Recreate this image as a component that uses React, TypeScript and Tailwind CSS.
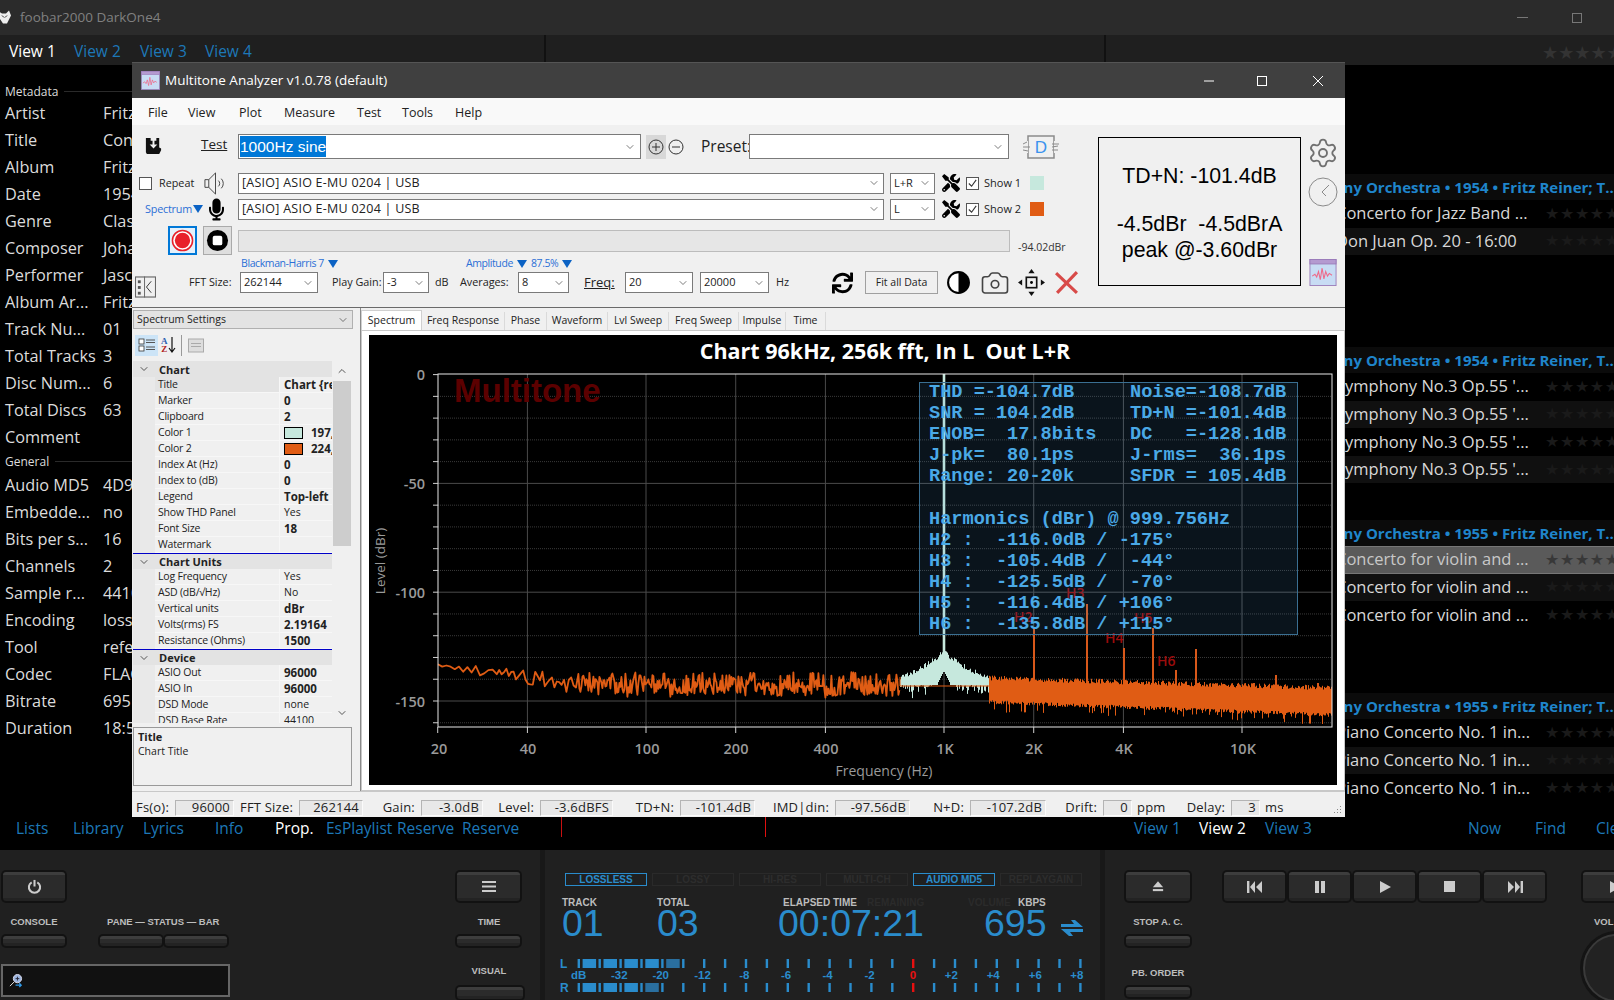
import React from "react";
import { FaTools, FaMicrophone, FaSync } from "react-icons/fa";
import { Camera, ChevronDown, ChevronUp, Settings } from "lucide-react";

function rng(seed: number) {
  let a = seed;
  return () => {
    a |= 0; a = (a + 0x6d2b79f5) | 0;
    let t = Math.imul(a ^ (a >>> 15), 1 | a);
    t = (t + Math.imul(t ^ (t >>> 7), 61 | t)) ^ t;
    return ((t ^ (t >>> 14)) >>> 0) / 4294967296;
  };
}

const meta = [
  ["Artist", "Fritz Reiner"], ["Title", "Concerto for Jazz"], ["Album", "Fritz Reiner"], ["Date", "1954"],
  ["Genre", "Classical"], ["Composer", "Johann"], ["Performer", "Jascha"], ["Album Ar...", "Fritz Reiner"],
  ["Track Nu...", "01"], ["Total Tracks", "3"], ["Disc Num...", "6"], ["Total Discs", "63"], ["Comment", ""],
];
const general = [
  ["Audio MD5", "4D9C"], ["Embedde...", "no"], ["Bits per s...", "16"], ["Channels", "2"], ["Sample r...", "44100"],
  ["Encoding", "lossless"], ["Tool", "reference"], ["Codec", "FLAC"], ["Bitrate", "695 kbps"], ["Duration", "18:53"],
];

function PropRow({ k, v }: { k: string; v: string }) {
  return (
    <div className="flex h-[27px] items-center text-[16.3px] text-[#dcdcdc] whitespace-nowrap">
      <span className="w-[98px] pl-[5px]">{k}</span>
      <span className="pl-[5px]">{v}</span>
    </div>
  );
}

function Stars({ tone }: { tone: string }) {
  return <span className={`w-[69px] shrink-0 overflow-hidden whitespace-nowrap text-[16px] leading-none font-['DejaVu_Sans',sans-serif] tracking-[0.6px] ${tone}`}>★★★★★</span>;
}

function Track({ t, alt, sel }: { t: string; alt?: boolean; sel?: boolean }) {
  return (
    <div className={`flex h-[27.6px] items-center justify-between pl-[231px] text-[16.5px] whitespace-nowrap ${sel ? "bg-[#5a5a5a] border-t border-b border-[#777777] text-[#c8c8c8]" : alt ? "bg-[#101010] text-[#d8d8d8]" : "text-[#d8d8d8]"}`}>
      <span>{t}</span>
      <Stars tone={sel ? "text-[#383838]" : "text-[#1a1a1a]"} />
    </div>
  );
}

function Group({ h, rows, sel }: { h: string; rows: string[]; sel?: number }) {
  return (
    <div className="h-[173px]">
      <div className="flex h-[26px] pt-[1px] items-center justify-end bg-[#0b0b0b] text-[15px] font-bold text-[#1f85cb] whitespace-nowrap overflow-hidden">
        <span className="mr-[-4px]">{h}</span>
      </div>
      {rows.map((r, i) => <Track key={i} t={r} alt={i % 2 === 1} sel={sel === i} />)}
    </div>
  );
}

function Chev() {
  return <ChevronDown className="w-[12px] h-[12px] text-[#444] shrink-0" strokeWidth={1.4} />;
}

function Combo({ t, cls, text = "text-[11px]" }: { t: string; cls: string; text?: string }) {
  return (
    <div className={`flex items-center justify-between h-[21px] border border-[#7a7a7a] bg-white pl-[3px] pr-[3px] shrink-0 ${cls}`}>
      <span className={`${text} text-[#222] whitespace-nowrap`}>{t}</span>
      <Chev />
    </div>
  );
}

function Tri() {
  return <span className="inline-block ml-[4px] w-0 h-0 border-l-[5px] border-r-[5px] border-t-[8px] border-l-transparent border-r-transparent border-t-[#0b62c4]" />;
}

function DevRow({ chan, show, swatch, left }: { chan: string; show: string; swatch: string; left: React.ReactNode }) {
  return (
    <div className="flex items-center h-[20px]">
      {left}
      <Combo t="[ASIO] ASIO E-MU 0204 | USB" cls="w-[646px]" text="text-[12.5px] tracking-[0.25px]" />
      <Combo t={chan} cls="w-[45px] ml-[6px]" />
      <FaTools className="w-[18px] h-[18px] ml-[7px] text-black shrink-0" />
      <div className="w-[13px] h-[13px] ml-[6px] border border-[#555] bg-white flex items-center justify-center shrink-0">
        <svg viewBox="0 0 12 12" className="w-[11px] h-[11px]"><path d="M2 6l3 3 5-7" fill="none" stroke="#333" strokeWidth="1.2" /></svg>
      </div>
      <span className="ml-[5px] w-[46px] text-[11px] text-[#222] whitespace-nowrap">{show}</span>
      <div className={`w-[14px] h-[14px] shrink-0 ${swatch}`} />
    </div>
  );
}

const propSections: { name: string; line?: boolean; rows: [string, string, number?, string?][] }[] = [
  { name: "Chart", rows: [["Title", "Chart {re", 1], ["Marker", "0", 1], ["Clipboard", "2", 1], ["Color 1", "197,", 1, "bg-[#c6e8dd]"], ["Color 2", "224,", 1, "bg-[#e05c14]"], ["Index At (Hz)", "0", 1], ["Index to (dB)", "0", 1], ["Legend", "Top-left", 1], ["Show THD Panel", "Yes", 0], ["Font Size", "18", 1], ["Watermark", "", 0]] },
  { name: "Chart Units", line: true, rows: [["Log Frequency", "Yes", 0], ["ASD (dB/√Hz)", "No", 0], ["Vertical units", "dBr", 1], ["Volts(rms) FS", "2.19164", 1], ["Resistance (Ohms)", "1500", 1]] },
  { name: "Device", line: true, rows: [["ASIO Out", "96000", 1], ["ASIO In", "96000", 1], ["DSD Mode", "none", 0], ["DSD Base Rate", "44100", 0]] },
];

function PropGrid() {
  return (
    <div className="flex w-[218px] h-[362px] overflow-hidden">
      <div className="w-[199px] leading-none text-[#222]">
        {propSections.map((s) => (
          <div key={s.name}>
            <div className={`flex h-[16px] items-center bg-[#e3e3e3] text-[11px] font-bold ${s.line ? "border-t border-t-[#0000c8]" : ""}`}>
              <ChevronDown className="w-[12px] h-[12px] ml-[5px] mr-[9px] text-[#555]" strokeWidth={2} />
              <span className="whitespace-nowrap">{s.name}</span>
            </div>
            {s.rows.map(([n, v, b, sw], i) => (
              <div key={n} className="flex h-[16px] bg-[#e9e9e9] pl-[22px]">
                <div className={`w-[124px] flex items-center pl-[3px] text-[10.5px] tracking-[-0.2px] whitespace-nowrap border-b border-b-[#f7f7f7] ${s.name === "Chart" && i === 0 ? "bg-[#e3e3e3]" : "bg-[#f0f0f0]"}`}>{n}</div>
                <div className={`w-[53px] flex items-center pl-[4px] overflow-hidden whitespace-nowrap border-l border-l-[#f7f7f7] border-b border-b-[#f7f7f7] bg-[#f0f0f0] ${b ? "font-bold text-[11.5px]" : "text-[10.5px]"}`}>
                  {sw ? <span className={`w-[19px] h-[12px] border border-black mr-[8px] shrink-0 ${sw}`} /> : null}
                  {v}
                </div>
              </div>
            ))}
          </div>
        ))}
      </div>
      <div className="w-[19px] h-full bg-[#f0f0f0] flex flex-col items-center">
        <ChevronUp className="w-[12px] h-[12px] mt-[4px] mb-[4px] text-[#555]" strokeWidth={2} />
        <div className="w-[18px] h-[165px] bg-[#cdcdcd]" />
        <div className="flex-1" />
        <ChevronDown className="w-[12px] h-[12px] mb-[4px] text-[#555]" strokeWidth={2} />
      </div>
    </div>
  );
}

function SpectrumChart() {
  const fx = (f: number) => 944 + 298 * Math.log10(f / 1000);
  const dy = (d: number) => 373.6 - d * 2.176;
  const r = rng(42);
  let low = "";
  for (let x = 438; x < 900; ) {
    const p = (x - 438) / 462;
    const base = 663 + 20 * Math.min(1, Math.pow(p / 0.35, 0.7));
    const amp = p < 0.04 ? 3 : 7 + 17 * Math.min(1, p * 2.5);
    let y = base + (r() - 0.5) * amp;
    if (r() > 0.93) y += r() * 8;
    low += (low ? "L" : "M") + x.toFixed(1) + " " + y.toFixed(1);
    x += p < 0.12 ? 4.2 : p < 0.3 ? 2.4 : 1;
  }
  let band = "";
  for (let x = 989.5; x < 1332; x += 1) {
    const p = (x - 989) / 343;
    const top = 677 + 10 * p + (r() - 0.5) * 5;
    const spike = r() > 0.85 ? r() * 12 : r() * 4;
    const bot = 699 + 13 * p + spike;
    band += `M${x} ${top.toFixed(1)}V${bot.toFixed(1)}`;
  }
  let mint = "";
  for (let x = 900.5; x < 990; x += 1) {
    const d = Math.abs(x - 944);
    const top = 645 + 32 * Math.pow(Math.min(1, d / 46), 0.55) + (r() - 0.5) * 5;
    const drop = d < 12 ? 0 : r() * r() * 16;
    const bot = 684 + drop - (d < 6 ? 14 - d * 2 : 0);
    mint += `M${x} ${top.toFixed(1)}V${bot.toFixed(1)}`;
  }
  const spikes: [number, number][] = [[1034, 627], [1087, 603], [1124, 647], [1153, 627], [1176, 669], [1196, 648], [1276, 674], [1102, 678], [1138, 682], [1254, 682], [1318, 682]];
  const left = ["THD =-104.7dB", "SNR = 104.2dB", "ENOB=  17.8bits", "J-pk=  80.1ps", "Range: 20-20k", "", "Harmonics (dBr) @ 999.756Hz", "H2 :  -116.0dB / -175°", "H3 :  -105.4dB /  -44°", "H4 :  -125.5dB /  -70°", "H5 :  -116.4dB / +106°", "H6 :  -135.8dB / +115°"];
  const right = ["Noise=-108.7dB", "TD+N =-101.4dB", "DC   =-128.1dB", "J-rms=  36.1ps", "SFDR = 105.4dB"];
  return (
    <svg viewBox="369 334 968 450" className="w-[968px] h-[450px] block bg-black">
      <text x="885" y="358" textAnchor="middle" fill="#fff" fontSize="21.5" fontWeight="700" fontFamily="Open Sans" xmlSpace="preserve">Chart 96kHz, 256k fft, In L  Out L+R</text>
      {[-10, -20, -30, -40, -60, -70, -80, -90, -110, -120, -130, -140, -160].map((d) => (
        <line key={d} x1="438" x2="1332" y1={dy(d)} y2={dy(d)} stroke="#3a3a3a" strokeWidth="1" strokeDasharray="1 1" />
      ))}
      {[-50, -100, -150].map((d) => (
        <line key={d} x1="438" x2="1332" y1={dy(d)} y2={dy(d)} stroke="#4a4a4a" strokeWidth="1" />
      ))}
      {[40, 100, 200, 400, 1000, 2000, 4000, 10000].map((f) => (
        <line key={f} x1={fx(f)} x2={fx(f)} y1="373" y2="726" stroke="#4a4a4a" strokeWidth="1" />
      ))}
      <text x="454" y="401" fill="#5c0000" fontSize="33" fontWeight="700" fontFamily="Liberation Sans">Multitone</text>
      <path d={mint} stroke="#c6e8dd" strokeWidth="1" fill="none" />
      <line x1="944" x2="944" y1="373" y2="660" stroke="#c6e8dd" strokeWidth="2.6" />
      <path d={low} stroke="#e05c14" strokeWidth="1.8" fill="none" strokeLinejoin="round" />
      <path d="M900 676V685H989" stroke="#e05c14" strokeWidth="1" fill="none" />
      {spikes.map(([x, y]) => <line key={x} x1={x} x2={x} y1={y} y2="690" stroke="#d8581a" strokeWidth="2" />)}
      <path d={band} stroke="#e05c14" strokeWidth="1" fill="none" />
      <rect x="438" y="373" width="894" height="353" fill="none" stroke="#e8e8e8" strokeWidth="1" />
      {[0, -10, -20, -30, -40, -50, -60, -70, -80, -90, -100, -110, -120, -130, -140, -150, -160].map((d) => (
        <line key={d} x1="433" x2="438" y1={dy(d)} y2={dy(d)} stroke="#d0d0d0" />
      ))}
      {[20, 40, 100, 200, 400, 1000, 2000, 4000, 10000].map((f) => (
        <line key={f} x1={fx(f)} x2={fx(f)} y1="726" y2="732" stroke="#d0d0d0" />
      ))}
      <g fill="#9a9a9a" fontSize="14.5" fontWeight="600" fontFamily="Open Sans" textAnchor="end">
        <text x="425" y="379">0</text>
        <text x="425" y="488">-50</text>
        <text x="425" y="597">-100</text>
        <text x="425" y="706">-150</text>
      </g>
      <g fill="#9a9a9a" fontSize="14.5" fontWeight="600" fontFamily="Open Sans" textAnchor="middle">
        <text x="439" y="753">20</text>
        <text x="528" y="753">40</text>
        <text x="647" y="753">100</text>
        <text x="736" y="753">200</text>
        <text x="826" y="753">400</text>
        <text x="945" y="753">1K</text>
        <text x="1034" y="753">2K</text>
        <text x="1124" y="753">4K</text>
        <text x="1243" y="753">10K</text>
      </g>
      <text x="884" y="775" fill="#9a9a9a" fontSize="14" textAnchor="middle" fontFamily="Open Sans">Frequency (Hz)</text>
      <text transform="translate(385 560) rotate(-90)" fill="#9a9a9a" fontSize="13.5" textAnchor="middle" fontFamily="Open Sans">Level (dBr)</text>
      <g fill="#9c0c0c" fontSize="14" fontWeight="600" fontFamily="Open Sans">
        <text x="1014" y="621">H2</text>
        <text x="1066" y="597">H3</text>
        <text x="1105" y="642">H4</text>
        <text x="1134" y="622">H5</text>
        <text x="1157" y="665">H6</text>
      </g>
      <rect x="919.5" y="381.5" width="378" height="252" fill="#4f9bd6" fillOpacity="0.13" stroke="#3a6f92" strokeWidth="1" />
      <g fill="#4aa9e6" fontSize="18.6" fontWeight="700" fontFamily="Liberation Mono">
        {left.map((l, i) => <text key={i} x="929" y={396 + i * 21.1} xmlSpace="preserve">{l}</text>)}
        {right.map((l, i) => <text key={i} x="1130" y={396 + i * 21.1} xmlSpace="preserve">{l}</text>)}
      </g>
    </svg>
  );
}

function Stat({ l, lc, v, bc }: { l: string; lc: string; v: string; bc: string }) {
  return (
    <>
      <span className={`text-right whitespace-nowrap shrink-0 ${lc}`}>{l}</span>
      <span className={`ml-[6px] h-[16px] shrink-0 flex items-center justify-end pr-[3px] bg-[#e8e8e8] border-t border-l border-[#b4b4b4] border-b border-b-[#fbfbfb] border-r border-r-[#fbfbfb] whitespace-nowrap ${bc}`}>{v}</span>
    </>
  );
}

function AppIcon({ cls }: { cls: string }) {
  return (
    <svg viewBox="0 0 30 30" className={cls}>
      <rect x="0.5" y="0.5" width="29" height="29" fill="#c8dcf4" stroke="#9a7ab8" />
      <rect x="0.5" y="0.5" width="29" height="5" fill="#b49ad0" stroke="#9a7ab8" />
      <path d="M3 19l3-2 2 3 2-6 2 9 2-13 2 12 2-8 2 5 2-3 3 2" fill="none" stroke="#ee6a8a" strokeWidth="1.2" />
    </svg>
  );
}

function TopWindow() {
  return (
    <div className="absolute left-[132px] top-[62px] w-[1213px] h-[755px] z-10 bg-[#f0f0f0] border-t border-t-[#555] flex flex-col text-[#222]">
      <div className="h-[35px] bg-[#404040] flex items-center pl-[9px] shrink-0">
        <AppIcon cls="w-[19px] h-[19px] shrink-0" />
        <span className="ml-[5px] text-[13.5px] text-white whitespace-nowrap">Multitone Analyzer v1.0.78 (default)</span>
        <div className="flex-1" />
        <svg width="12" height="12" viewBox="0 0 12 12" className="mr-[41px]"><path d="M1 6h10" stroke="#fff" /></svg>
        <svg width="12" height="12" viewBox="0 0 12 12" className="mr-[44px]"><rect x="1.5" y="1.5" width="9" height="9" fill="none" stroke="#fff" /></svg>
        <svg width="12" height="12" viewBox="0 0 12 12" className="mr-[21px]"><path d="M1 1l10 10M11 1L1 11" stroke="#fff" /></svg>
      </div>
      <div className="h-[27px] pt-[4px] bg-[#f9f9f9] flex items-center text-[12.5px] shrink-0 pl-[16px]">
        <span className="w-[40px]">File</span>
        <span className="w-[51px]">View</span>
        <span className="w-[45px]">Plot</span>
        <span className="w-[73px]">Measure</span>
        <span className="w-[45px]">Test</span>
        <span className="w-[53px]">Tools</span>
        <span>Help</span>
      </div>

      <div className="flex h-[182px] shrink-0">
        <div className="w-[966px] shrink-0 flex flex-col">
          <div className="flex items-center h-[25px] mt-[9px]">
            <svg viewBox="0 0 20 20" className="w-[19px] h-[19px] ml-[12px] shrink-0"><path d="M2 1h5v3h6V1h3v10l2 1v2L16 18H3l-1-2z" fill="#111" /><path d="M9 3v5H6l4 4 4-4h-3V3z" fill="#f0f0f0" /></svg>
            <span className="ml-[38px] w-[29px] text-[13.5px] underline shrink-0 mt-[-4px]">Test</span>
            <div className="ml-[8px] w-[403px] h-[25px] border border-[#7a7a7a] bg-white flex items-center justify-between pl-[1px] pr-[4px] shrink-0">
              <span className="bg-[#0078d7] text-white text-[15.5px] leading-[21px] font-['Liberation_Sans',sans-serif] whitespace-nowrap">1000Hz sine</span>
              <Chev />
            </div>
            <div className="ml-[5px] w-[20px] h-[24px] bg-[#d8d8d8] flex items-center justify-center shrink-0">
              <svg viewBox="0 0 16 16" className="w-[16px] h-[16px]"><circle cx="8" cy="8" r="7" fill="none" stroke="#333" /><path d="M4 8h8M8 4v8" stroke="#333" /></svg>
            </div>
            <svg viewBox="0 0 16 16" className="w-[16px] h-[16px] ml-[2px] shrink-0"><circle cx="8" cy="8" r="7" fill="none" stroke="#333" /><path d="M4 8h8" stroke="#333" /></svg>
            <span className="ml-[17px] w-[48px] text-[15.5px] whitespace-nowrap shrink-0">Preset:</span>
            <div className="w-[260px] h-[25px] border border-[#7a7a7a] bg-white flex items-center justify-end pr-[4px] shrink-0"><Chev /></div>
            <svg viewBox="0 0 36 26" className="w-[36px] h-[26px] ml-[14px] shrink-0">
              <rect x="5" y="2" width="26" height="22" fill="none" stroke="#8a8a8a" strokeWidth="1.5" />
              <rect x="0" y="7" width="5" height="12" fill="#f0f0f0" />
              <rect x="31" y="7" width="5" height="12" fill="#f0f0f0" />
              <path d="M0 10l4-2M0 13h7M0 16l5 1M29 10h7M29 13l6-1M29 16h6" stroke="#8a8a8a" />
              <text x="18" y="19" textAnchor="middle" fontSize="17" fontFamily="Liberation Sans" fill="#3b93ee">D</text>
            </svg>
          </div>

          <div className="mt-[14px]">
            <DevRow chan="L+R" show="Show 1" swatch="bg-[#c6e8dd]"
              left={
                <div className="w-[106px] flex items-center shrink-0">
                  <div className="w-[13px] h-[13px] ml-[7px] border border-[#555] bg-white shrink-0" />
                  <span className="ml-[7px] w-[45px] text-[10.8px] whitespace-nowrap">Repeat</span>
                  <svg viewBox="0 0 26 26" className="w-[25px] h-[25px] ml-[-1px] shrink-0"><path d="M2 9h4l7-7v22l-7-7H2z" fill="none" stroke="#444" /><path d="M6 9v8" stroke="#444" /><path d="M16 10a4 4 0 010 6M19 8a7 7 0 010 10" fill="none" stroke="#444" /></svg>
                </div>
              } />
          </div>
          <div className="mt-[6px]">
            <DevRow chan="L" show="Show 2" swatch="bg-[#e05c14]"
              left={
                <div className="w-[106px] flex items-center shrink-0">
                  <span className="ml-[13px] w-[44px] text-[10.8px] tracking-[-0.2px] text-[#2b6fd6] whitespace-nowrap">Spectrum</span>
                  <Tri />
                  <FaMicrophone className="w-[15px] h-[23px] ml-[6px] text-black shrink-0" />
                </div>
              } />
          </div>

          <div className="flex items-center h-[29px] mt-[7px]">
            <div className="ml-[36px] w-[29px] h-[29px] border-2 border-[#0078d7] bg-[#e5f1fb] flex items-center justify-center shrink-0">
              <svg viewBox="0 0 24 24" className="w-[23px] h-[23px]"><circle cx="12" cy="12" r="10.5" fill="#fff" stroke="#e8202a" strokeWidth="1.6" /><circle cx="12" cy="12" r="8" fill="#e8202a" /></svg>
            </div>
            <div className="ml-[6px] w-[29px] h-[29px] border border-[#aaa] bg-[#dedede] flex items-center justify-center shrink-0">
              <svg viewBox="0 0 24 24" className="w-[23px] h-[23px]"><circle cx="12" cy="12" r="11" fill="#000" /><rect x="7" y="7" width="10" height="10" rx="2" fill="#fff" /></svg>
            </div>
            <div className="ml-[6px] w-[772px] h-[22px] bg-[#e6e6e6] border border-[#bcbcbc] shrink-0" />
            <span className="ml-[8px] mt-[14px] text-[10.5px] text-[#333] whitespace-nowrap">-94.02dBr</span>
          </div>

          <div className="flex items-center h-[14px] mt-[2px] text-[10.5px] tracking-[-0.4px] text-[#2b6fd6] whitespace-nowrap">
            <span className="ml-[109px]">Blackman-Harris 7</span><Tri />
            <span className="ml-[128px]">Amplitude</span><Tri />
            <span className="ml-[4px]">87.5%</span><Tri />
          </div>

          <div className="flex items-center h-[21px] mt-[1px] text-[10.8px] whitespace-nowrap">
            <svg viewBox="0 0 22 22" className="w-[21px] h-[22px] ml-[3px] mt-[8px] shrink-0"><rect x="0.5" y="0.5" width="21" height="21" fill="none" stroke="#666" strokeWidth="1.2" /><path d="M10 0v22" stroke="#666" /><path d="M17 5l-5 6 5 6" stroke="#333" fill="none" /><rect x="3" y="4" width="3" height="3" fill="#555" /><rect x="3" y="10" width="3" height="3" fill="#555" /><rect x="3" y="16" width="3" height="3" fill="#555" /></svg>
            <span className="ml-[33px] w-[47px]">FFT Size:</span>
            <Combo t="262144" cls="w-[78px] ml-[4px]" />
            <span className="ml-[14px] w-[47px]">Play Gain:</span>
            <Combo t="-3" cls="w-[46px] ml-[4px]" />
            <span className="ml-[6px] w-[19px]">dB</span>
            <span className="ml-[6px] w-[52px]">Averages:</span>
            <Combo t="8" cls="w-[51px] ml-[6px]" />
            <span className="ml-[15px] w-[33px] text-[13px] underline">Freq:</span>
            <Combo t="20" cls="w-[68px] ml-[8px]" />
            <Combo t="20000" cls="w-[69px] ml-[7px]" />
            <span className="ml-[7px] w-[19px]">Hz</span>
            <FaSync className="w-[21px] h-[24px] ml-[37px] text-black shrink-0" />
            <div className="ml-[12px] w-[73px] h-[23px] border border-[#a0a0a0] flex items-center justify-center text-[10.5px] shrink-0">Fit all Data</div>
            <svg viewBox="0 0 24 24" className="w-[25px] h-[25px] ml-[8px] shrink-0"><circle cx="12" cy="12" r="11" fill="#000" /><path d="M12 3a9 9 0 000 18z" fill="#fff" /></svg>
            <Camera className="w-[30px] h-[30px] ml-[9px] text-[#444] shrink-0" strokeWidth={1.3} />
            <svg viewBox="0 0 26 26" className="w-[27px] h-[27px] ml-[8px] shrink-0"><rect x="8" y="8" width="10" height="10" fill="none" stroke="#111" strokeWidth="1.6" /><circle cx="13" cy="13" r="1.4" /><path d="M13 0l3 4h-6zM13 26l-3-4h6zM0 13l4-3v6zM26 13l-4 3v-6z" fill="#111" /></svg>
            <svg viewBox="0 0 24 24" className="w-[25px] h-[25px] ml-[9px] shrink-0"><path d="M2 3l20 19M22 2L3 22" stroke="#d84a48" strokeWidth="3" /></svg>
          </div>
        </div>

        <div className="flex items-start shrink-0">
          <div className="mt-[12px] w-[203px] h-[149px] pt-[25px] border border-black flex flex-col items-center text-[21.3px] leading-[26px] text-black font-['Liberation_Sans',sans-serif] whitespace-pre">
            <span>TD+N: -101.4dB</span>
            <span className="h-[22px]" />
            <span>-4.5dBr  -4.5dBrA</span>
            <span>peak @-3.60dBr</span>
          </div>
          <div className="ml-[6px] mt-[12px] w-[32px] h-[149px] flex flex-col items-center">
            <Settings className="w-[32px] h-[32px] text-[#707070]" strokeWidth={1.4} />
            <svg viewBox="0 0 30 30" className="w-[30px] h-[30px] mt-[8px]"><circle cx="15" cy="15" r="14" fill="none" stroke="#8a8a8a" /><path d="M21 8l-7 7 4 4" fill="none" stroke="#8a8a8a" /></svg>
            <div className="flex-1" />
            <AppIcon cls="w-[30px] h-[27px]" />
          </div>
        </div>
      </div>

      <div className="h-[1px] bg-[#6a6a6a] shrink-0" />

      <div className="flex h-[484px] shrink-0 border-b border-b-[#c8c8c8]">
        <div className="w-[229px] shrink-0 flex flex-col pl-[1px] border-r border-r-[#8a8a8a]">
          <div className="mt-[2px] w-[220px] h-[19px] bg-[#e3e3e3] border border-[#b0b0b0] flex items-center justify-between px-[3px] text-[10.5px] whitespace-nowrap">
            <span>Spectrum Settings</span><Chev />
          </div>
          <div className="flex items-center h-[32px] pl-[2px] bg-[#f0f0f0]">
            <div className="w-[23px] h-[21px] bg-[#cce4f7] flex items-center justify-center">
              <svg viewBox="0 0 18 16" className="w-[18px] h-[16px]"><rect x="1" y="2" width="5" height="5" fill="#fff" stroke="#333" strokeWidth=".8" /><rect x="1" y="9" width="5" height="5" fill="#fff" stroke="#333" strokeWidth=".8" /><path d="M8 3h9M8 5.5h9M8 10h9M8 12.5h9" stroke="#555" /></svg>
            </div>
            <span className="ml-[3px] flex flex-col text-[9px] leading-[8px] font-bold text-center font-['Liberation_Serif',serif]"><span className="text-[#2b5fb0]">A</span><span className="text-[#b02020]">Z</span></span>
            <svg viewBox="0 0 8 18" className="w-[8px] h-[18px]"><path d="M4 1v14M1 12l3 4 3-4" fill="none" stroke="#111" strokeWidth="1.2" /></svg>
            <div className="ml-[5px] w-[1px] h-[21px] bg-[#999]" />
            <svg viewBox="0 0 16 14" className="ml-[6px] w-[16px] h-[15px]"><rect x=".5" y=".5" width="15" height="13" fill="#ddd" stroke="#aaa" /><path d="M3 5h10M3 8h10" stroke="#aaa" /></svg>
          </div>
          <PropGrid />
          <div className="mt-[4px] w-[219px] h-[59px] border border-[#999] px-[4px] py-[1px] text-[10.5px] leading-[15px]">
            <div className="font-bold text-[11px]">Title</div>
            <div>Chart Title</div>
          </div>
        </div>

        <div className="w-[984px] shrink-0 flex flex-col">
          <div className="flex h-[20px] mt-[2px] items-end text-[10.5px] whitespace-nowrap">
            <div className="w-[61px] h-[20px] bg-white border border-[#d0d0d0] border-b-0 flex items-center justify-center">Spectrum</div>
            <div className="w-[83px] h-[18px] border-r border-[#dadada] flex items-center justify-center">Freq Response</div>
            <div className="w-[42px] h-[18px] border-r border-[#dadada] flex items-center justify-center">Phase</div>
            <div className="w-[61px] h-[18px] border-r border-[#dadada] flex items-center justify-center">Waveform</div>
            <div className="w-[61px] h-[18px] border-r border-[#dadada] flex items-center justify-center">Lvl Sweep</div>
            <div className="w-[70px] h-[18px] border-r border-[#dadada] flex items-center justify-center">Freq Sweep</div>
            <div className="w-[47px] h-[18px] border-r border-[#dadada] flex items-center justify-center">Impulse</div>
            <div className="w-[40px] h-[18px] border-r border-[#dadada] flex items-center justify-center">Time</div>
          </div>
          <div className="w-[984px] h-[462px] bg-white border border-[#c8c8c8] pl-[7px] pt-[4px]">
            <SpectrumChart />
          </div>
        </div>
      </div>

      <div className="flex items-center h-[24px] pt-[8px] text-[13px] tracking-[0.2px] text-[#222] bg-[#f0f0f0] shrink-0">
        <Stat l="Fs(o):" lc="w-[37px]" v="96000" bc="w-[59px]" />
        <Stat l="FFT Size:" lc="w-[59px]" v="262144" bc="w-[64px]" />
        <Stat l="Gain:" lc="w-[52px]" v="-3.0dB" bc="w-[62px]" />
        <Stat l="Level:" lc="w-[51px]" v="-3.6dBFS" bc="w-[73px]" />
        <Stat l="TD+N:" lc="w-[61px]" v="-101.4dB" bc="w-[75px]" />
        <Stat l="IMD|din:" lc="w-[74px]" v="-97.56dB" bc="w-[75px]" />
        <Stat l="N+D:" lc="w-[54px]" v="-107.2dB" bc="w-[76px]" />
        <Stat l="Drift:" lc="w-[51px]" v="0" bc="w-[29px]" />
        <span className="ml-[5px] w-[29px]">ppm</span>
        <Stat l="Delay:" lc="w-[59px]" v="3" bc="w-[29px]" />
        <span className="ml-[5px]">ms</span>
        <div className="flex-1" />
        <svg viewBox="0 0 10 10" className="w-[10px] h-[10px] mr-[3px] mt-[4px]"><path d="M8 1h1v1H8zM5 4h1v1H5zM8 4h1v1H8zM2 7h1v1H2zM5 7h1v1H5zM8 7h1v1H8z" fill="#888" /></svg>
      </div>
    </div>
  );
}

function Btn({ cls, children }: { cls: string; children?: React.ReactNode }) {
  return (
    <div className={`rounded-[5px] bg-[#121212] p-[2px] shrink-0 ${cls}`}>
      <div className="w-full h-full rounded-[3px] bg-[#2b2b2b] border-t-[3px] border-t-[#3d3d3d] border-b-[3px] border-b-[#232323] flex items-center justify-center">{children}</div>
    </div>
  );
}

function Lbl({ t, cls = "" }: { t: string; cls?: string }) {
  return <div className={`text-[9.5px] leading-[12px] font-bold font-['Liberation_Sans',sans-serif] text-[#bdbdbd] whitespace-nowrap text-center ${cls}`}>{t}</div>;
}

function Badge({ t, on, cls }: { t: string; on?: boolean; cls: string }) {
  return <div className={`h-[13px] flex items-center justify-center text-[10px] font-bold font-['Liberation_Sans',sans-serif] border whitespace-nowrap shrink-0 ${on ? "border-[#2a8ccc] text-[#2a8ccc]" : "border-[#2a2a2a] text-[#2d2d2d]"} ${cls}`}>{t}</div>;
}

function Meter() {
  const xs = Array.from({ length: 25 }, (_, n) => 38.6 + 20.9 * n);
  const labels: [string, number][] = [["dB", 108], ["-32", 222], ["-20", 338], ["-12", 455], ["-8", 572], ["-6", 689], ["-4", 805], ["-2", 923], ["0", 1044], ["+2", 1152], ["+4", 1269], ["+6", 1387], ["+8", 1503]];
  const row = (y: number, h: number, bright: number, dim: number) => (
    <g>
      {xs.map((x, n) => <rect key={n} x={x - 1} y={y} width="2.4" height={h} fill={n === 16 ? "#e81010" : "#2a8ccc"} />)}
      {xs.slice(0, bright).map((x, n) => <rect key={n} x={x + 4} y={y} width="13.5" height={h} fill="#2a8ccc" />)}
      <rect x={xs[dim] + 4} y={y} width="13.5" height={h} fill="#2a6f9f" />
    </g>
  );
  return (
    <svg viewBox="0 0 560 38" className="w-[560px] h-[38px] block">
      {row(2, 9, 4, 4)}
      {row(26, 9, 3, 3)}
      <g fill="#2a8ccc" fontSize="12" fontWeight="700" fontFamily="Liberation Sans">
        <text x="20" y="11">L</text>
        <text x="20" y="35">R</text>
      </g>
      <g fontSize="11.5" fontWeight="700" fontFamily="Liberation Sans" textAnchor="middle">
        {labels.map(([t, v]) => <text key={t} x={v / 2.8} y="22" fill={t === "0" ? "#e81010" : "#2a8ccc"}>{t}</text>)}
      </g>
    </svg>
  );
}

function BottomPanel() {
  return (
    <div className="flex h-[150px] bg-[#202020] overflow-hidden">
      <div className="w-[540px] shrink-0 flex justify-between pt-[20px] pl-[1px] pr-[17px]">
        <div className="w-[230px] flex flex-col">
          <Btn cls="w-[66px] h-[33px]">
            <svg viewBox="0 0 16 16" className="w-[15px] h-[15px]"><path d="M5 3.5a6 6 0 106 0" fill="none" stroke="#ccc" strokeWidth="2.2" /><path d="M8 1v7" stroke="#ccc" strokeWidth="2.2" /></svg>
          </Btn>
          <div className="flex mt-[13px]">
            <Lbl t="CONSOLE" cls="w-[66px]" />
            <Lbl t="PANE — STATUS — BAR" cls="ml-[40px]" />
          </div>
          <div className="flex mt-[6px]">
            <Btn cls="w-[66px] h-[14px]" />
            <Btn cls="w-[66px] h-[14px] ml-[31px]" />
            <Btn cls="w-[66px] h-[14px] ml-[-1px]" />
          </div>
          <div className="mt-[16px] w-[229px] h-[33px] border-2 border-[#666] bg-[#111] flex items-center pl-[6px]">
            <svg viewBox="0 0 16 16" className="w-[15px] h-[15px]"><circle cx="9" cy="6" r="4.4" fill="#9cb6e0" stroke="#dde" /><path d="M5.5 9.5L1 14" stroke="#eee" /><path d="M7 6h4M9 4v4" stroke="#223" /><path d="M7 13h6M11 11l2 2-2 2" stroke="#2f9ae8" strokeWidth="1.4" fill="none" /></svg>
          </div>
        </div>
        <div className="w-[68px] flex flex-col">
          <Btn cls="w-[67px] h-[33px]">
            <svg viewBox="0 0 16 12" className="w-[16px] h-[12px]"><path d="M1 1h14M1 5.5h14M1 10h14" stroke="#ccc" strokeWidth="2.2" /></svg>
          </Btn>
          <Lbl t="TIME" cls="mt-[13px]" />
          <Btn cls="w-[67px] h-[14px] mt-[6px]" />
          <Lbl t="VISUAL" cls="mt-[17px]" />
          <Btn cls="w-[70px] h-[16px] mt-[8px]" />
        </div>
      </div>
      <div className="w-[5px] shrink-0 bg-[#181818]" />
      <div className="w-[555px] shrink-0 flex flex-col pt-[23px]">
        <div className="flex pl-[20px] gap-[5px]">
          <Badge t="LOSSLESS" on cls="w-[82px]" />
          <Badge t="LOSSY" cls="w-[82px]" />
          <Badge t="HI-RES" cls="w-[82px]" />
          <Badge t="MULTI-CH" cls="w-[82px]" />
          <Badge t="AUDIO MD5" on cls="w-[82px]" />
          <Badge t="REPLAYGAIN" cls="w-[82px]" />
        </div>
        <div className="flex h-[12px] mt-[11px] text-[10px] leading-[12px] font-bold font-['Liberation_Sans',sans-serif] text-[#bdbdbd] whitespace-nowrap">
          <span className="ml-[17px] w-[95px]">TRACK</span>
          <span className="w-[126px]">TOTAL</span>
          <span className="w-[44px]">ELAPSED</span>
          <span className="ml-[6px] w-[34px]">TIME</span>
          <span className="w-[101px] text-[#2b2b2b]">REMAINING</span>
          <span className="w-[50px] text-[#2b2b2b]">VOLUME</span>
          <span>KBPS</span>
        </div>
        <div className="flex items-center h-[36px] mt-[-4px] text-[37.5px] leading-[36px] text-[#2a8ccc] font-['Liberation_Sans',sans-serif] whitespace-nowrap">
          <span className="ml-[17px] w-[95px]">01</span>
          <span className="w-[121px]">03</span>
          <span className="w-[206px]">00:07:21</span>
          <span className="w-[76px]">695</span>
          <svg viewBox="0 0 24 16" className="w-[24px] h-[16px] mt-[10px]"><path d="M1 4h13l-3-4h4l8 7H1zM23 12H10l3 4H9L1 9h22z" fill="#2a8ccc" /></svg>
        </div>
        <div className="mt-[16px] ml-[-5px]"><Meter /></div>
      </div>
      <div className="w-[5px] shrink-0 bg-[#181818]" />
      <div className="flex-1 flex pt-[20px] pl-[19px]">
        <div className="w-[68px] flex flex-col shrink-0">
          <Btn cls="w-[68px] h-[33px]">
            <svg viewBox="0 0 14 12" className="w-[12px] h-[11px]"><path d="M7 0l6 7H1z" fill="#ccc" /><rect x="1" y="9" width="12" height="2.4" fill="#ccc" /></svg>
          </Btn>
          <Lbl t="STOP A. C." cls="mt-[13px]" />
          <Btn cls="w-[68px] h-[14px] mt-[6px]" />
          <Lbl t="PB. ORDER" cls="mt-[19px]" />
          <Btn cls="w-[68px] h-[14px] mt-[6px]" />
        </div>
        <div className="flex ml-[30px] shrink-0">
          <Btn cls="w-[65px] h-[33px]"><svg viewBox="0 0 16 12" className="w-[16px] h-[12px]"><path d="M0 0h2.4v12H0zM8 0v12L3 6zM15 0v12L9 6z" fill="#ccc" /></svg></Btn>
          <Btn cls="w-[65px] h-[33px]"><svg viewBox="0 0 12 12" className="w-[12px] h-[12px]"><path d="M1 0h4v12H1zM7 0h4v12H7z" fill="#ccc" /></svg></Btn>
          <Btn cls="w-[65px] h-[33px]"><svg viewBox="0 0 12 12" className="w-[12px] h-[12px]"><path d="M1 0l11 6-11 6z" fill="#ccc" /></svg></Btn>
          <Btn cls="w-[65px] h-[33px]"><svg viewBox="0 0 12 12" className="w-[11px] h-[11px]"><rect width="12" height="12" fill="#ccc" /></svg></Btn>
          <Btn cls="w-[65px] h-[33px]"><svg viewBox="0 0 16 12" className="w-[16px] h-[12px]"><path d="M1 0l6 6-6 6zM8 0l5 6-5 6zM13.6 0H16v12h-2.4z" fill="#ccc" /></svg></Btn>
        </div>
        <div className="flex flex-col ml-[34px] w-[100px] shrink-0">
          <Btn cls="w-[68px] h-[33px]"><svg viewBox="0 0 12 12" className="w-[12px] h-[12px]"><path d="M1 0l11 6-11 6z" fill="#ccc" /></svg></Btn>
          <Lbl t="VOL" cls="mt-[13px] ml-[13px] w-[20px] text-left" />
          <div className="mt-[3px] ml-[-1px] w-[74px] h-[74px] rounded-full bg-[#141414] p-[3px] shrink-0">
            <div className="w-full h-full rounded-full bg-[#222] border-2 border-[#3a3a3a]" />
          </div>
        </div>
      </div>
    </div>
  );
}

export default function App() {
  return (
    <div className="relative w-[1614px] h-[1000px] overflow-hidden bg-black flex flex-col font-['Open_Sans','Noto_Sans',sans-serif]">
      <div className="h-[35px] bg-[#2b2b2b] flex items-center shrink-0">
        <svg viewBox="0 0 14 16" className="w-[14px] h-[17px] ml-[-1px] shrink-0"><path d="M0 2l3 2h4l3-3 2 5-4 8H4L0 8z" fill="#eee" /><path d="M3 6l2 2M8 6L6 8" stroke="#2b2b2b" /></svg>
        <span className="ml-[7px] text-[13.5px] text-[#808080] whitespace-nowrap">foobar2000 DarkOne4</span>
        <div className="flex-1" />
        <div className="w-[11px] h-[1px] bg-[#777] mr-[44px]" />
        <div className="w-[10px] h-[10px] border border-[#777] mr-[32px]" />
      </div>
      <div className="h-[30px] pt-[4px] bg-[#1f1f1f] flex shrink-0">
        <div className="w-[544px] flex items-center text-[15.5px] text-[#1d78b8] whitespace-nowrap pl-[9px] shrink-0">
          <span className="w-[65px] text-white">View 1</span>
          <span className="w-[66px]">View 2</span>
          <span className="w-[65px]">View 3</span>
          <span>View 4</span>
        </div>
        <div className="w-[2px] mt-[-4px] bg-[#111] shrink-0" />
        <div className="w-[558px] shrink-0" />
        <div className="w-[2px] mt-[-4px] bg-[#111] shrink-0" />
        <div className="flex-1 flex items-center justify-end">
          <span className="w-[72px] overflow-hidden text-[18px] font-['DejaVu_Sans',sans-serif] text-[#333] whitespace-nowrap">★★★★★</span>
        </div>
      </div>

      <div className="flex h-[752px] shrink-0 overflow-hidden">
        <div className="w-[545px] pt-[18px] shrink-0">
          <div className="flex items-center h-[17px] text-[12px] text-[#dcdcdc] pl-[5px]">
            <span>Metadata</span><div className="ml-[6px] flex-1 h-[1px] bg-[#2a2a2a]" />
          </div>
          {meta.map(([k, v]) => <PropRow key={k} k={k} v={v} />)}
          <div className="flex items-center h-[21px] text-[12px] text-[#dcdcdc] pl-[5px]">
            <span>General</span><div className="ml-[6px] flex-1 h-[1px] bg-[#2a2a2a]" />
          </div>
          {general.map(([k, v]) => <PropRow key={k} k={k} v={v} />)}
        </div>
        <div className="w-[560px] shrink-0" />
        <div className="flex-1 min-w-0 pt-[109px]">
          <Group h="Chicago Symphony Orchestra • 1954 • Fritz Reiner; T..." rows={["Concerto for Jazz Band ...", "Don Juan Op. 20 - 16:00"]} />
          <Group h="Chicago Symphony Orchestra • 1954 • Fritz Reiner, T..." rows={["Symphony No.3 Op.55 '...", "Symphony No.3 Op.55 '...", "Symphony No.3 Op.55 '...", "Symphony No.3 Op.55 '..."]} />
          <Group h="Chicago Symphony Orchestra • 1955 • Fritz Reiner, T..." rows={["Concerto for violin and ...", "Concerto for violin and ...", "Concerto for violin and ..."]} sel={0} />
          <Group h="Chicago Symphony Orchestra • 1955 • Fritz Reiner; T..." rows={["Piano Concerto No. 1 in...", "Piano Concerto No. 1 in...", "Piano Concerto No. 1 in..."]} />
        </div>
      </div>

      <div className="relative flex items-start h-[33px] text-[15.5px] leading-[22px] text-[#1d78b8] whitespace-nowrap shrink-0">
        <span className="ml-[16px] w-[57px] shrink-0">Lists</span>
        <span className="w-[70px] shrink-0">Library</span>
        <span className="w-[72px] shrink-0">Lyrics</span>
        <span className="w-[60px] shrink-0">Info</span>
        <span className="w-[51px] shrink-0 text-white">Prop.</span>
        <span className="w-[71px] shrink-0">EsPlaylist</span>
        <span className="w-[65px] shrink-0">Reserve</span>
        <span className="w-[672px] shrink-0">Reserve</span>
        <span className="w-[65px] shrink-0">View 1</span>
        <span className="w-[66px] shrink-0 text-white">View 2</span>
        <span className="w-[203px] shrink-0">View 3</span>
        <span className="w-[67px] shrink-0">Now</span>
        <span className="w-[61px] shrink-0">Find</span>
        <span className="shrink-0">Clear</span>
        <div className="absolute left-[561px] top-0 w-[1px] h-[20px] bg-[#c81010]" />
        <div className="absolute left-[765px] top-0 w-[1px] h-[20px] bg-[#e01010]" />
      </div>

      <BottomPanel />
      <TopWindow />
    </div>
  );
}
